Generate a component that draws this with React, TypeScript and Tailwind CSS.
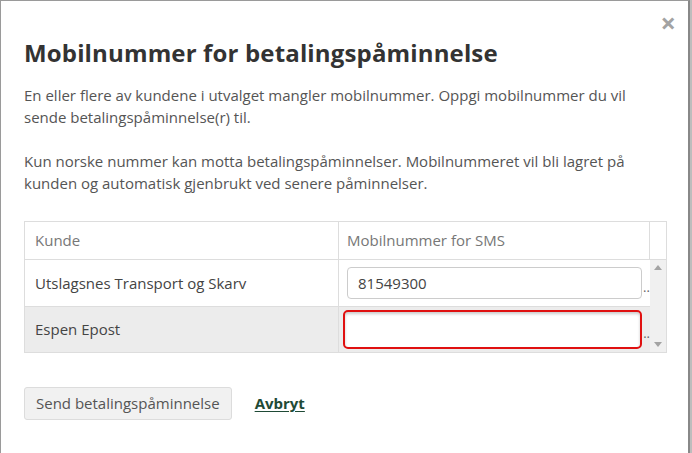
import React from "react";

export default function App() {
  const font = { fontFamily: '"Open Sans", "Noto Sans", sans-serif' };
  return (
    <div className="w-[692px] h-[453px] bg-[#bdbdbd] overflow-hidden" style={font}>
      <div className="relative w-[690px] h-[453px] bg-white border-l border-t border-r-2 border-l-[#9a9a9a] border-t-[#9a9a9a] border-r-[#888888] px-[23px]">
        <button className="absolute top-[8px] right-[12px] text-[27px] leading-none font-bold text-[#a3a3a3]">×</button>
        <h1 className="pt-[36px] text-[24px] leading-[32px] font-bold text-[#333333] tracking-[0.15px]">
          Mobilnummer for betalingspåminnelse
        </h1>
        <div className="mt-[15px] text-[15px] leading-[22px] text-[#555555]">
          <p>
            En eller flere av kundene i utvalget mangler mobilnummer. Oppgi mobilnummer du vil sende
            betalingspåminnelse(r) til.
          </p>
          <p className="mt-[22px]">
            Kun norske nummer kan motta betalingspåminnelser. Mobilnummeret vil bli lagret på kunden og
            automatisk gjenbrukt ved senere påminnelser.
          </p>
        </div>
        <div className="mt-[27px] w-[643px] border border-[#dddddd] text-[15px] text-[#555555]">
          <div className="flex h-[37px] text-[#777777]">
            <div className="w-[314px] border-r border-[#dddddd] flex items-center px-[10px]">Kunde</div>
            <div className="w-[311px] border-r border-[#dddddd] flex items-center px-[8px]">Mobilnummer for SMS</div>
            <div className="flex-1" />
          </div>
          <div className="flex border-t border-[#dddddd]">
            <div className="flex flex-col w-[625px]">
              <div className="flex h-[46px] bg-white">
                <div className="w-[314px] border-r border-[#dddddd] flex items-center px-[10px] text-[#444444]">
                  Utslagsnes Transport og Skarv
                </div>
                <div className="w-[311px] flex items-center pl-[8px]">
                  <div className="w-[295px] h-[32px] border border-[#cccccc] rounded-[4px] flex items-center px-[10px] text-[#444444] bg-white">
                    81549300
                  </div>
                  <span className="text-[13px] text-[#666666] ml-[1px] mt-[8px] leading-none">..</span>
                </div>
              </div>
              <div className="flex h-[46px] bg-[#ececec] border-t border-[#dddddd]">
                <div className="w-[314px] border-r border-[#dddddd] flex items-center px-[10px] text-[#444444]">
                  Espen Epost
                </div>
                <div className="w-[311px] flex items-center pl-[4px]">
                  <div className="w-[302px] h-[39px] border-2 border-[#e01010] rounded-[5px] bg-white shadow-[inset_0_2px_3px_rgba(0,0,0,0.2)]" />
                  <span className="text-[13px] text-[#666666] ml-[1px] mt-[8px] leading-none">..</span>
                </div>
              </div>
            </div>
            <div className="flex-1 bg-[#f0f0f0] flex flex-col justify-between items-center py-[5px]">
              <svg width="8" height="5" viewBox="0 0 8 5"><path d="M4 0 L8 5 L0 5 Z" fill="#a3a3a3" /></svg>
              <svg width="8" height="5" viewBox="0 0 8 5"><path d="M0 0 L8 0 L4 5 Z" fill="#a3a3a3" /></svg>
            </div>
          </div>
        </div>
        <div className="mt-[34px] flex items-center">
          <button className="h-[33px] px-[11px] bg-[#f1f1f1] border border-[#dcdcdc] rounded-[3px] text-[15px] text-[#555555]">
            Send betalingspåminnelse
          </button>
          <a href="#" className="ml-[23px] text-[15px] font-bold text-[#1f4a36] underline underline-offset-2">
            Avbryt
          </a>
        </div>
      </div>
    </div>
  );
}
